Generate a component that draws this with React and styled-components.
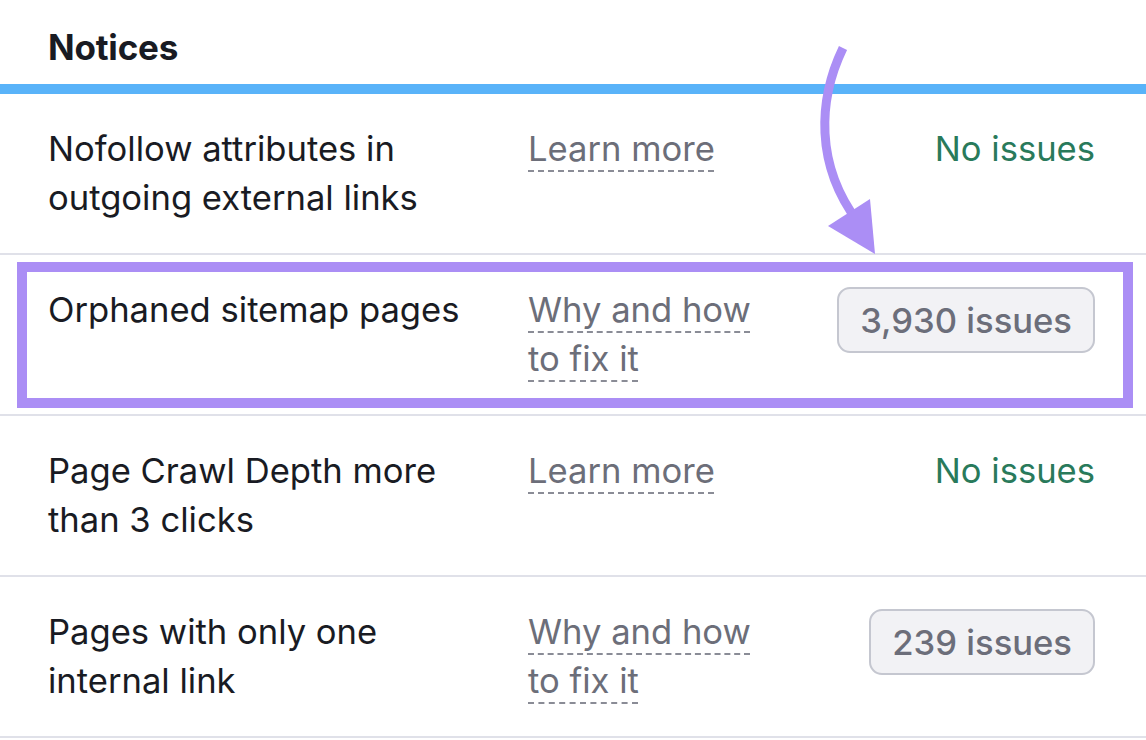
import React from 'react';
import styled, { createGlobalStyle } from 'styled-components';

const GlobalStyle = createGlobalStyle`
  html, body {
    margin: 0;
    padding: 0;
    background: #fff;
  }
  body {
    font-family: Inter, "Noto Sans", "Liberation Sans", sans-serif;
    color: #191b23;
  }
`;

const Page = styled.div`
  position: relative;
  width: 1146px;
  height: 740px;
  overflow: hidden;
`;

const Header = styled.div`
  height: 84px;
  box-sizing: border-box;
  padding: 10px 0 0 48px;
  display: flex;
  align-items: center;
  font-size: 35px;
  font-weight: 700;
  letter-spacing: -0.2px;
`;

const BlueBar = styled.div`
  height: 10px;
  background: #59b3f9;
`;

const Row = styled.div`
  position: relative;
  display: grid;
  grid-template-columns: 460px 240px 1fr;
  column-gap: 20px;
  padding: 30px 51px 31px 48px;
  border-bottom: 2px solid #e0e1e9;
  font-size: 34.6px;
  line-height: 49px;

  ${(p) => p.$highlight && `
    &::after {
      content: '';
      position: absolute;
      top: 7px;
      bottom: 6px;
      left: 17px;
      right: 13px;
      border: 10px solid #ab8ef5;
      pointer-events: none;
    }
  `}
`;

const Title = styled.div`
  color: #191b23;
`;

const HelpLink = styled.div`
  color: #6c6e79;
`;

const Dashed = styled.span`
  text-decoration: underline dashed #8a8c96;
  text-decoration-thickness: 2px;
  text-underline-offset: 9px;
`;

const Status = styled.div`
  display: flex;
  justify-content: flex-end;
  align-items: flex-start;
`;

const Ok = styled.span`
  color: #297a5b;
`;

const Badge = styled.span`
  margin-top: 2px;
  height: 66px;
  box-sizing: border-box;
  display: inline-flex;
  align-items: center;
  padding: 0 21px;
  border: 2px solid #c5c7d0;
  border-radius: 13px;
  background: #f2f2f5;
  color: #6c6e7a;
  font-weight: 500;
`;

const Arrow = styled.svg`
  position: absolute;
  left: 0;
  top: 0;
  pointer-events: none;
`;

const rows = [
  { title: 'Nofollow attributes in outgoing external links', link: 'Learn more', issues: 0 },
  { title: 'Orphaned sitemap pages', link: 'Why and how to fix it', issues: '3,930', highlight: true },
  { title: 'Page Crawl Depth more than 3 clicks', link: 'Learn more', issues: 0 },
  { title: 'Pages with only one internal link', link: 'Why and how to fix it', issues: '239' },
];

export default function App() {
  return (
    <Page>
      <GlobalStyle />
      <Header>Notices</Header>
      <BlueBar />
      {rows.map((r) => (
        <Row key={r.title} $highlight={r.highlight}>
          <Title>{r.title}</Title>
          <HelpLink><Dashed>{r.link}</Dashed></HelpLink>
          <Status>
            {r.issues ? <Badge>{r.issues} issues</Badge> : <Ok>No issues</Ok>}
          </Status>
        </Row>
      ))}
      <Arrow width="1146" height="740" viewBox="0 0 1146 740">
        <path d="M843 48 C818 100, 815 165, 858 222" fill="none" stroke="#ab8ef5" strokeWidth="9" />
        <polygon points="828,226 870,199 875,254" fill="#ab8ef5" />
      </Arrow>
    </Page>
  );
}
